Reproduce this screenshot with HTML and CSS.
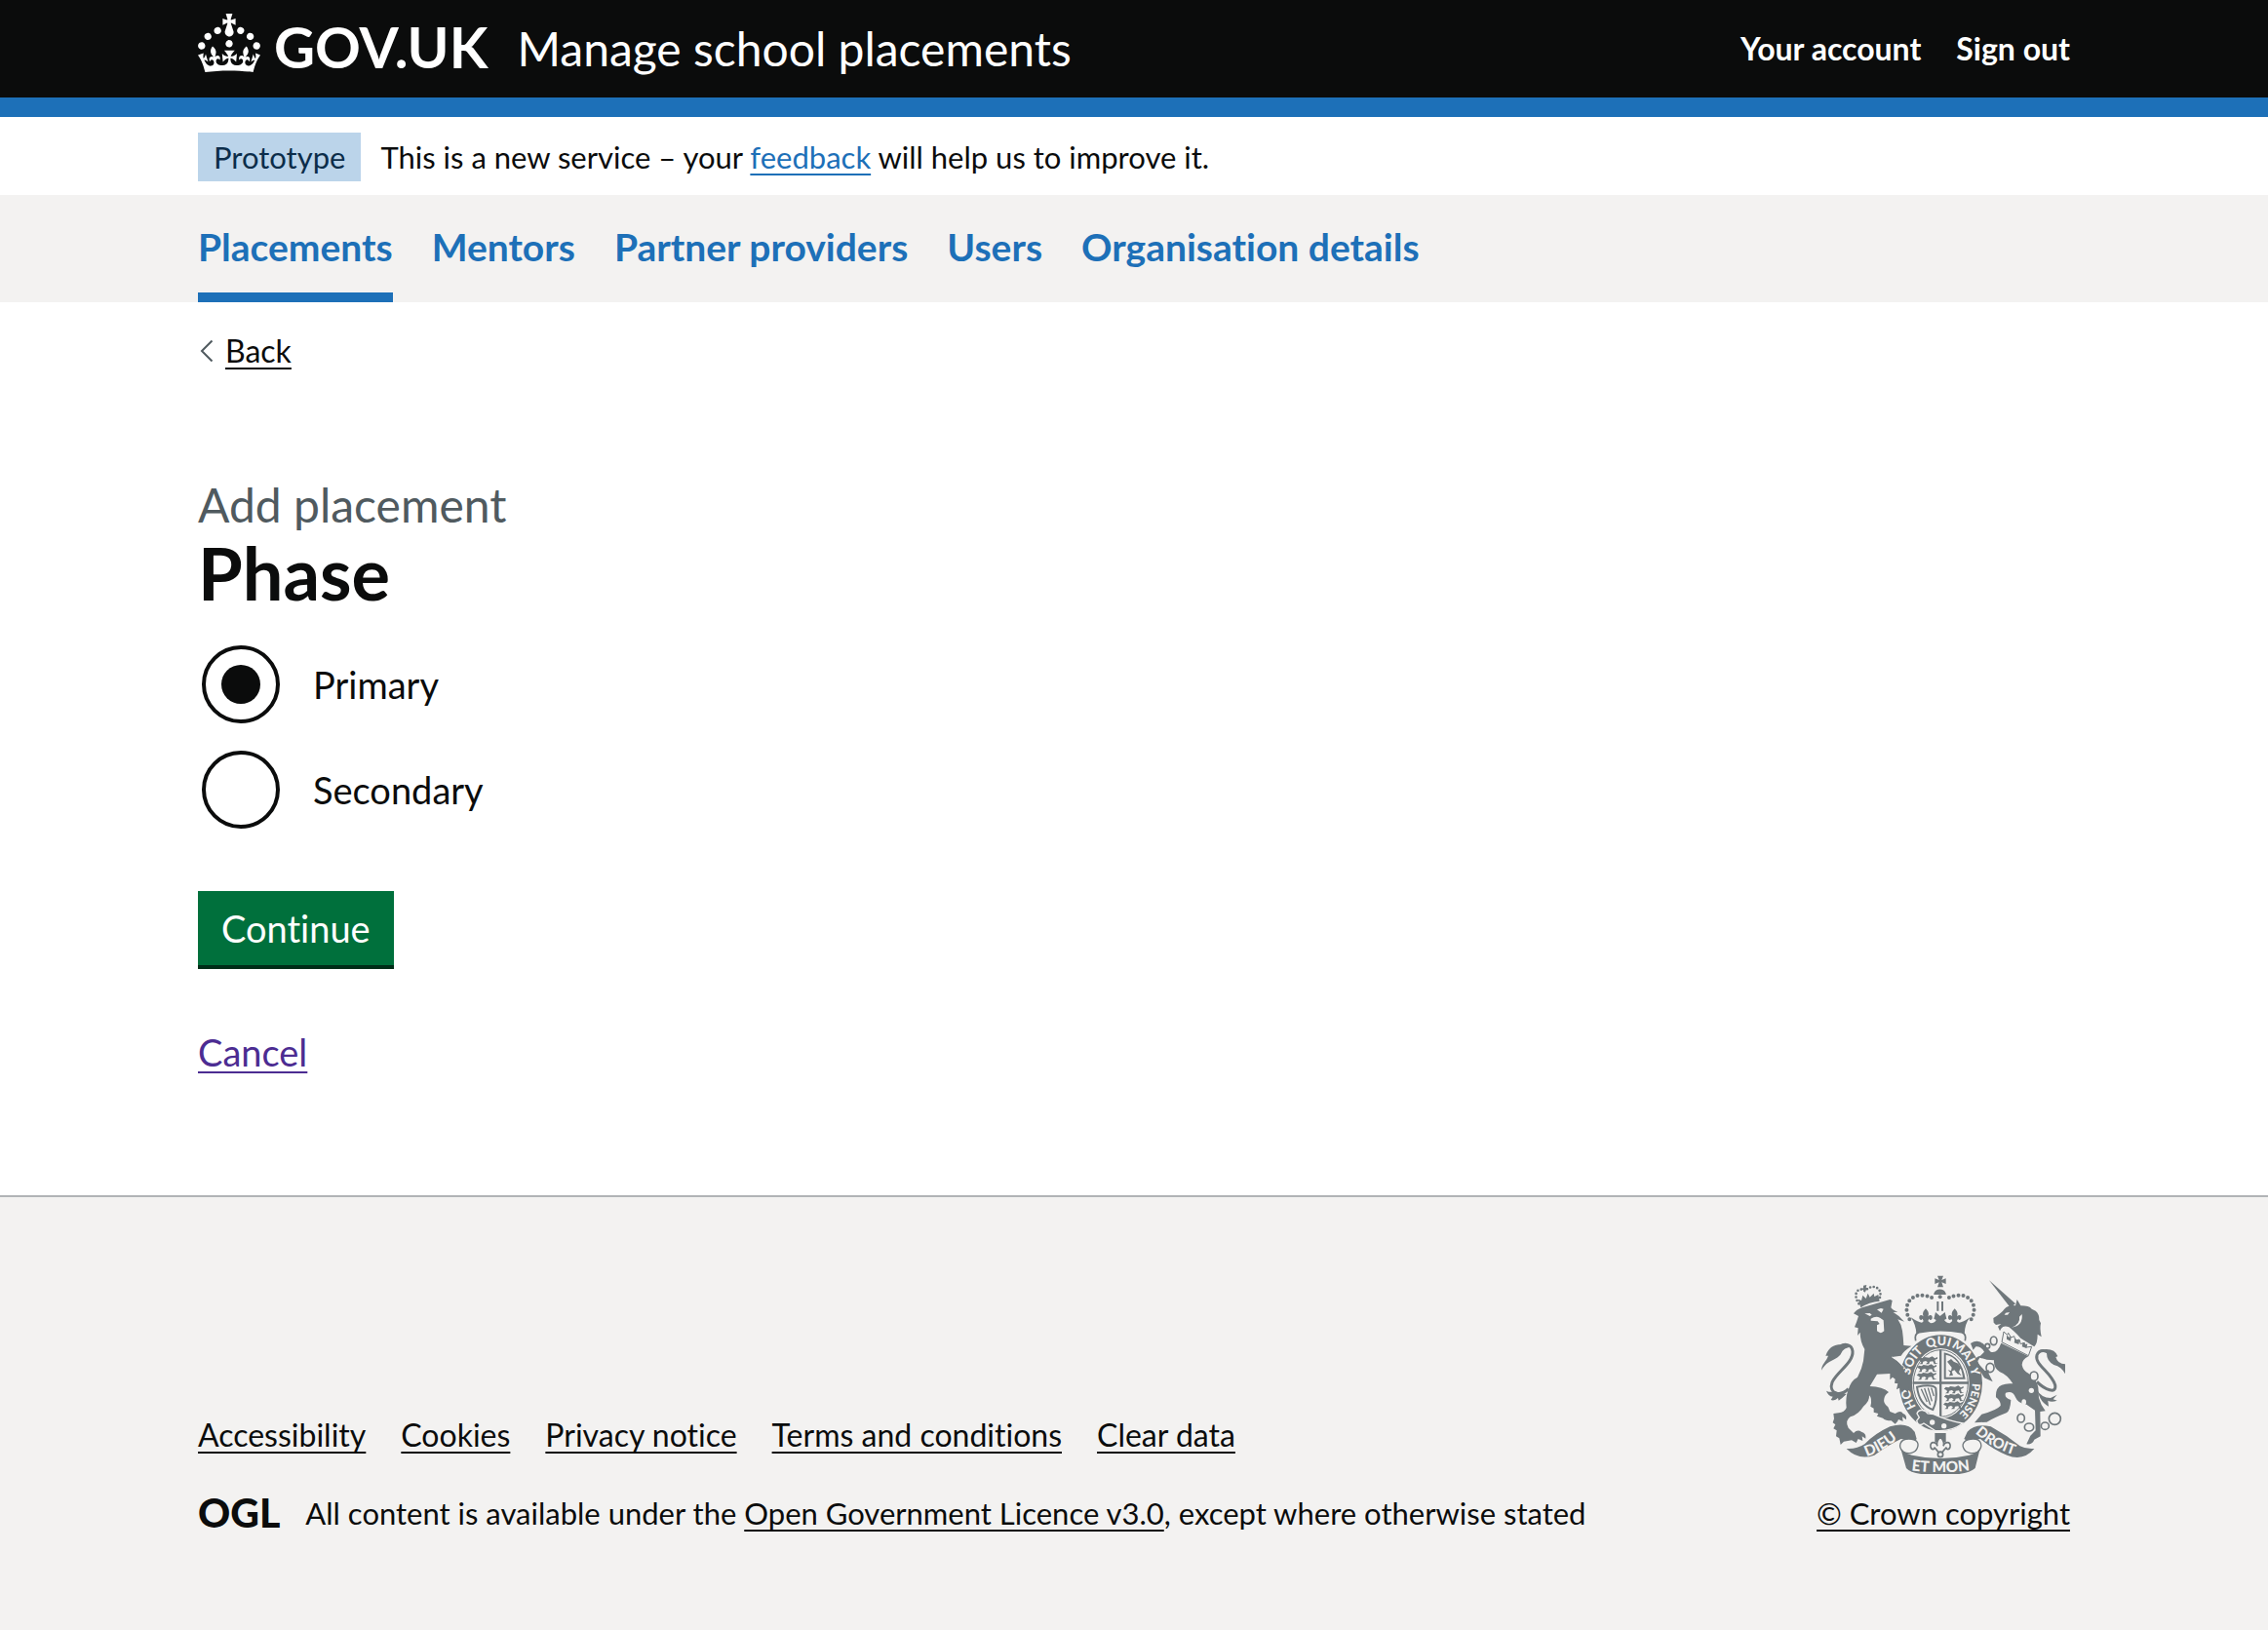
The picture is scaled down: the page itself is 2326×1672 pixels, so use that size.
FILE: index.html
```html
<!DOCTYPE html>
<html lang="en">
<head>
<meta charset="utf-8">
<meta name="viewport" content="width=device-width, initial-scale=1">
<title>Phase - Manage school placements - GOV.UK</title>
<link rel="stylesheet" href="styles.css">
</head>
<body>
<header class="header">
  <div class="container header-row">
    <a class="logo" href="#">
      <svg class="logo-crown" viewBox="0 0 32 30" aria-hidden="true"><path fill="currentColor" d="M22.6 10.4c-1 .4-2-.1-2.4-1-.4-.9.1-2 1-2.4.9-.4 2 .1 2.4 1s-.1 2-1 2.4m-5.9 6.7c-.9.4-2-.1-2.4-1-.4-.9.1-2 1-2.4.9-.4 2 .1 2.4 1s-.1 2-1 2.4m10.8-3.7c-1 .4-2-.1-2.4-1-.4-.9.1-2 1-2.4.9-.4 2 .1 2.4 1s0 2-1 2.4m3.3 4.8c-1 .4-2-.1-2.4-1-.4-.9.1-2 1-2.4.9-.4 2 .1 2.4 1s-.1 2-1 2.4M17 4.700l2.300 1.200V2.500l-2.300.7-.2-.2.9-3h-3.400l.9 3-.2.2c-.1.1-2.300-.7-2.300-.7v3.400L15 4.700c.1.1.1.2.2.2l-1.300 4c-.1.2-.1.4-.1.6 0 1.100.8 2 1.900 2.200h.7c1-.2 1.900-1.100 1.900-2.100 0-.2 0-.4-.1-.6l-1.300-4c-.1-.2 0-.2.1-.3m-7.600 5.700c.9.4 2-.1 2.400-1 .4-.9-.1-2-1-2.400-.9-.4-2 .1-2.400 1s0 2 1 2.400m-5 3c.9.4 2-.1 2.400-1 .4-.9-.1-2-1-2.400-.9-.4-2 .1-2.400 1s.1 2 1 2.400m-3.200 4.800c.9.4 2-.1 2.400-1 .4-.9-.1-2-1-2.400-.9-.4-2 .1-2.400 1s0 2 1 2.400m14.800 11c4.400 0 8.600.3 12.300.8 1.100-4.500 2.400-7 3.700-8.800l-2.500-.9c.2 1.300.3 1.900 0 2.700-.4-.4-.8-1.100-1.100-2.300l-1.200 4c.7-.5 1.300-.8 2-.9-1.100 2.500-2.600 3.100-3.500 3-1.100-.2-1.700-1.200-1.500-2.100.3-1.200 1.500-1.500 2.100-.1 1.100-2.300-.8-3-2-2.300 1.900-1.900 2.100-3.500.6-5.600-2.100 1.600-2.100 3.200-1.200 5.500-1.200-1.400-3.200-.6-2.500 1.600.9-1.400 2.100-.5 1.900.8-.2 1.100-1.700 2.100-3.500 1.900-2.700-.2-2.900-2.100-2.900-3.600.7-.1 1.900.5 2.900 1.900l.4-4.300c-1.100 1.100-2.100 1.400-3.200 1.400.4-1.200 2.100-3 2.100-3h-5.400s1.700 1.900 2.100 3c-1.100 0-2.100-.2-3.200-1.400l.4 4.300c1-1.400 2.200-2 2.900-1.900-.1 1.500-.2 3.400-2.900 3.600-1.900.2-3.400-.8-3.500-1.900-.2-1.300 1-2.200 1.900-.8.7-2.300-1.200-3-2.500-1.600.9-2.200.9-3.900-1.200-5.500-1.500 2-1.300 3.700.6 5.600-1.200-.7-3.100 0-2 2.300.6-1.400 1.800-1.100 2.100.1.2.9-.3 1.900-1.500 2.100-.9.2-2.400-.5-3.500-3 .6 0 1.200.3 2 .9l-1.200-4c-.3 1.100-.7 1.900-1.100 2.300-.3-.8-.2-1.400 0-2.700l-2.900.9C1.300 23 2.600 25.500 3.700 30c3.700-.5 7.900-.8 12.300-.8"/></svg>
      <span class="logo-text">GOV.UK</span>
    </a>
    <a class="service-name" href="#">Manage school placements</a>
    <nav class="account" aria-label="Account">
      <a href="#">Your account</a>
      <a href="#">Sign out</a>
    </nav>
  </div>
</header>

<div class="container phase-banner">
  <strong class="tag">Prototype</strong>
  <span>This is a new service – your <a class="link" href="#">feedback</a> will help us to improve it.</span>
</div>

<nav class="primary-nav" aria-label="Primary">
  <ul class="container nav-list">
    <li><a class="current" aria-current="page" href="#">Placements</a></li>
    <li><a href="#">Mentors</a></li>
    <li><a href="#">Partner providers</a></li>
    <li><a href="#">Users</a></li>
    <li><a href="#">Organisation details</a></li>
  </ul>
</nav>

<div class="container page">
  <div class="back">
    <svg class="back-arrow" viewBox="0 0 14 24" aria-hidden="true"><path d="M12.500 1.500 2 12l10.500 10.500" fill="none" stroke="#505a5f" stroke-width="2"/></svg>
    <a class="link link-plain" href="#">Back</a>
  </div>
  <main>
    <form>
      <fieldset class="fieldset">
        <legend class="legend">
          <span class="caption">Add placement</span>
          <h1 class="heading">Phase</h1>
        </legend>
        <div class="radios">
          <div class="radio"><input type="radio" id="primary" name="phase" checked><label for="primary">Primary</label></div>
          <div class="radio"><input type="radio" id="secondary" name="phase"><label for="secondary">Secondary</label></div>
        </div>
      </fieldset>
      <button class="button" type="button">Continue</button>
      <p class="cancel"><a class="link link-visited" href="#">Cancel</a></p>
    </form>
  </main>
</div>

<footer class="footer">
  <div class="container footer-row">
    <div class="footer-meta">
      <ul class="footer-links">
        <li><a class="link link-plain" href="#">Accessibility</a></li>
        <li><a class="link link-plain" href="#">Cookies</a></li>
        <li><a class="link link-plain" href="#">Privacy notice</a></li>
        <li><a class="link link-plain" href="#">Terms and conditions</a></li>
        <li><a class="link link-plain" href="#">Clear data</a></li>
      </ul>
      <div class="licence">
        <span class="ogl">OGL</span>
        <span>All content is available under the <a class="link link-plain" href="#">Open Government Licence v3.0</a>, except where otherwise stated</span>
      </div>
    </div>
    <a class="copyright" href="#">
      <svg class="crest" viewBox="51 52 750 612" aria-hidden="true">
        <defs>
          <path id="garter" d="M418 500A97 116 0 0 1 418 268A97 116 0 0 1 418 500"/>
          <path id="dieu" d="M190 610Q250 590 300 543"/>
          <path id="droit" d="M524 538Q580 590 662 610"/>
          <path id="mon" d="M318 651Q418 666 518 651"/>
          <g id="fleur"><path d="M0-24C9-14 12-8 5 4C8-6 22-8 20 6C18 12 12 12 11 7C8 10 7 14 5 19H-5C-7 14-8 10-11 7C-12 12-18 12-20 6C-22-8-8-6-5 4C-12-8-9-14 0-24Z"/></g>
          <g id="beast"><path d="M0 8 6 2 14 4 20 0 34 2 44-2 52 4 60 0 60 5 52 9 54 18 62 20 50 22 46 13 36 14 34 22 24 22 30 16 24 12 16 14 14 22 4 22 10 17 8 12Z"/></g>
        </defs>
        <g fill="#6f777b">
          <!-- royal crown -->
          <path d="M408 54h18l-5 13 13-5v17l-13-5 5 15h-18l5-15-13 5V62l13 5ZM397 108a20 20 0 0 1 37 0v4h-37Z"/>
          <circle cx="416" cy="119" r="6"/>
          <path d="M406 133h6v29h-6ZM420 133h6v29h-6Z"/>
          <g fill="none" stroke="#6f777b" stroke-width="12" stroke-linecap="round" stroke-dasharray="0 15"><path d="M322 188C294 138 338 92 398 125"/><path d="M512 188C540 138 496 92 436 125"/></g>
          <path d="M326 182Q350 198 360 198L372 188 387 200Q401 199 404 190L397 186 402 166 416 178 431 166 436 186 429 190Q434 199 446 200L460 188 474 198Q486 198 508 182Q492 202 491 233Q418 213 343 233Q342 204 326 182Z"/>
          <use href="#fleur" x="372" y="179"/><use href="#fleur" x="461" y="179"/>
          <path d="M341 254Q336 232 352 228Q418 216 482 228Q498 232 493 254" fill="#f3f2f1" stroke="#6f777b" stroke-width="5"/>

          <!-- garter and shield -->
          <path fill-rule="evenodd" d="M418 236A128 148 0 0 1 418 532A128 148 0 0 1 418 236ZM418 277A88 108 0 0 0 418 493A88 108 0 0 0 418 277Z"/>
          <ellipse cx="418" cy="385" rx="84" ry="103" fill="none" stroke="#6f777b" stroke-width="3"/>
          <path d="M414 281h7v208h-7ZM332 380h172v7H332Z"/>
          <use href="#beast" x="348" y="304"/><use href="#beast" x="345" y="328"/><use href="#beast" x="344" y="352"/>
          <use href="#beast" x="428" y="394"/><use href="#beast" x="428" y="418"/><use href="#beast" x="426" y="442"/>
          <path d="M428 290Q482 300 494 372H428ZM434 297V366H486Q478 306 434 297Z" fill-rule="evenodd"/>
          <path d="M438 318l12-8 8 8 14 6 12 18-6-2-4 10 8 12-12-6-10-12-8 4 4 12-12 2 4-10-8-8 10 2 2-10Z"/>
          <path d="M345 396Q392 386 403 400Q408 438 394 466Q352 452 345 396Z" fill="none" stroke="#6f777b" stroke-width="6"/>
          <path d="M358 402 376 442M368 400 386 452M379 399 391 440M389 399 397 424" stroke="#6f777b" stroke-width="4"/>
          <g fill="#f3f2f1" font-family="Lato, sans-serif" font-weight="900" font-size="38" text-anchor="middle">
            <text><textPath href="#garter" startOffset="18%">HO</textPath></text>
            <text><textPath href="#garter" startOffset="35%">SOIT</textPath></text>
            <text><textPath href="#garter" startOffset="49%">QUI</textPath></text>
            <text><textPath href="#garter" startOffset="61%">MAL</textPath></text>
            <text><textPath href="#garter" startOffset="70%">Y</textPath></text>
            <text font-size="34"><textPath href="#garter" startOffset="83%">PENSE</textPath></text>
          </g>
          <path d="M345 478C350 462 372 466 378 478L396 480Q440 500 486 508Q450 535 400 530L366 508Q350 520 344 500L352 490Z" stroke="#f3f2f1" stroke-width="4"/>
          <circle cx="392" cy="505" r="8" fill="#f3f2f1"/><circle cx="428" cy="516" r="8" fill="#f3f2f1"/>
          <path d="M400 538h34v28h-34Z"/>
          <path d="M417 550C428 562 430 570 426 578C430 564 450 562 447 580C444 592 434 588 436 582C430 588 426 592 424 596H410C408 592 404 588 398 582C400 588 390 592 387 580C384 562 404 564 408 578C404 570 406 562 417 550Z" fill="#f3f2f1" stroke="#6f777b" stroke-width="5"/>
          <circle cx="417" cy="604" r="8" fill="#f3f2f1" stroke="#6f777b" stroke-width="5"/>

          <!-- lion -->
          <g fill="none" stroke="#6f777b" stroke-width="8" stroke-linecap="round" stroke-dasharray="0 11"><path d="M166 140C144 105 168 86 186 101C206 74 246 92 228 128"/></g>
          <path d="M180 84 190 82 188 90 196 92 188 98 184 106 180 98 172 94 180 92ZM164 126 174 130 178 114 188 124 194 108 200 120 212 108 214 118 226 112 230 132Q198 134 172 152Z"/>
          <path d="M150 170Q158 158 176 152L262 127 269 130 265 152Q270 160 286 165L272 166Q290 176 306 195L286 188Q298 205 300 223Q303 244 304 268L328 270Q304 285 296 300L268 304Q292 318 304 340Q310 362 328 376L328 405 320 396 318 414 306 402 302 412 294 398 282 404 286 386 276 384 278 372 270 366 262 374 262 355 250 356 222 357 200 394Q240 396 258 412Q246 420 244 432Q240 445 256 458L262 472 278 478Q296 466 302 478Q314 480 312 497L300 488 302 502 288 496Q286 504 278 510L266 500Q248 500 240 492L222 486 226 478 212 474 212 462 202 456Q208 430 198 422Q200 440 180 456Q166 480 140 488Q122 500 134 522L150 538Q162 526 174 534Q190 538 187 555L176 548 178 562 164 556 158 568 144 560 120 564 110 574 106 554 96 548 98 530 88 524 94 512 86 506 90 494 88 478 104 476Q122 474 128 460Q124 430 134 404Q142 376 162 366Q176 340 180 316L184 280Q170 256 170 228L162 238 164 215 153 212Q160 195 165 178Z"/>
          <path d="M184 170l16 8 6-4-6-5ZM222 158l14 10 6-12-8-2ZM203 186q15-9 28-3l11 8 2 33q-10 11-22 0l0-18 8-4-6-8-21-2Z" fill="#f3f2f1"/>
          <path d="M268 304Q300 322 316 350" fill="none" stroke="#f3f2f1" stroke-width="3"/>
          <path d="M134 402C108 428 72 416 84 382C98 350 150 322 147 286C144 264 122 262 108 272" fill="none" stroke="#6f777b" stroke-width="9"/>
          <path d="M51 345C52 324 66 318 72 300L64 300C76 268 96 264 120 266L146 272Q118 276 112 292C100 316 70 310 51 345ZM66 408Q78 414 92 410L128 418Q116 430 104 438L102 430Q92 440 80 436L86 426Q72 424 66 408Z"/>

          <!-- unicorn -->
          <path d="M567 68 648 140 632 152Z"/>
          <path d="M580 184Q606 168 614 156Q628 142 648 146L653 127 664 146Q690 146 698 156L710 162Q722 172 721 190L726 200Q722 216 728 242L716 234Q716 262 706 272Q690 262 664 246Q644 224 628 212Q612 206 604 216L600 224 594 210 604 202 588 205 581 198Z"/>
          <path d="M618 168l12-2-6 8h-10ZM668 172Q672 208 636 213Q664 202 660 180Z" fill="#f3f2f1"/>
          <path d="M612 226 623 236 626 230 634 244 644 240 648 254 660 250 664 264 676 260 680 274 698 272 688 300 606 258Z" fill="#f3f2f1" stroke="#6f777b" stroke-width="3"/>
          <path d="M621 249l0-12 8 6 6-3-2 15ZM644 260l3-14 8 8 6-3-3 14ZM668 272l3-14 8 8 6-3-3 14Z"/>
          <path d="M604 261 688 302Q668 312 668 328Q672 348 688 354Q714 374 718 398L720 430Q726 452 740 470L724 472 725 548 706 558Q700 574 682 572L694 546 710 530 708 468 682 450Q656 448 648 428Q640 406 618 414Q612 430 634 436Q632 470 620 476Q584 490 560 504L522 506 544 480Q590 468 602 454Q604 440 588 428Q586 398 606 390Q620 384 640 386Q622 358 600 350Q580 336 582 314L560 312 538 306 530 320 554 346 566 344 566 356 578 380 552 368 538 344 526 330Q518 304 540 300L552 288Q542 270 526 272L518 282 510 262Q532 248 550 264L572 288Q592 294 604 261Z"/>
          <g fill="#f3f2f1"><circle cx="697" cy="407" r="8"/><ellipse cx="674" cy="443" rx="7" ry="9"/></g>
          <g fill="none" stroke="#6f777b" stroke-width="5"><ellipse cx="581" cy="254" rx="10" ry="13"/><circle cx="562" cy="270" r="7"/><ellipse cx="570" cy="337" rx="12" ry="14"/><ellipse cx="705" cy="363" rx="12" ry="14" fill="#f3f2f1"/><ellipse cx="665" cy="492" rx="11" ry="13"/><ellipse cx="690" cy="520" rx="14" ry="12"/><ellipse cx="739" cy="516" rx="12" ry="11"/><circle cx="769" cy="494" r="18"/></g>
          <path d="M714 380C738 404 776 420 770 390C758 350 706 328 714 298C722 278 744 284 752 292" fill="none" stroke="#6f777b" stroke-width="9"/>
          <path d="M726 282Q768 274 778 302L772 304Q778 326 801 326V356Q790 334 766 328Q744 316 744 292ZM712 402Q728 430 756 430L776 420 764 434 776 438Q758 444 748 438L750 456Q732 446 724 430Z"/>

          <!-- motto ribbon -->
          <path d="M128 586Q160 588 184 572Q214 540 262 518Q316 502 338 534L344 556Q334 570 318 574Q318 558 296 556Q258 574 214 606Q166 624 128 586Z"/>
          <path d="M706 586Q680 588 662 578Q620 544 572 518Q524 506 500 534L490 556Q504 566 518 572Q524 556 540 556Q580 590 622 606Q672 626 706 586Z"/>
          <path d="M320 556C346 556 352 570 346 584C340 600 318 604 304 596C284 580 292 556 320 556ZM518 556C492 556 482 570 488 584C494 600 516 604 532 596C550 580 544 556 518 556Z" fill="#f3f2f1" stroke="#6f777b" stroke-width="4"/>
          <path d="M294 582Q300 598 330 606Q418 626 506 606Q534 598 540 582L524 646Q500 668 418 667Q330 668 312 646Z"/>
          <g fill="#f3f2f1" font-family="Lato, sans-serif" font-weight="900" font-size="46">
            <text><textPath href="#dieu">DIEU</textPath></text>
            <text font-size="44"><textPath href="#droit">DROIT</textPath></text>
            <text text-anchor="middle"><textPath href="#mon" startOffset="50%">ET MON</textPath></text>
          </g>
        </g>
      </svg>
      <span class="link link-plain">© Crown copyright</span>
    </a>
  </div>
</footer>
</body>
</html>
```
FILE: styles.css
```css
*, *::before, *::after { box-sizing: border-box; }

body {
  margin: 0;
  min-height: 100vh;
  display: flex;
  flex-direction: column;
  background: #fff;
  color: #0b0c0c;
  font-family: Lato, sans-serif;
  font-size: 32px;
  font-variant-ligatures: none;
  line-height: 40px;
}

ul { margin: 0; padding: 0; list-style: none; }

.container { width: calc(100% - 60px); max-width: 1920px; margin: 0 auto; }

.link {
  color: #1d70b8;
  text-decoration: underline;
  text-decoration-thickness: 2px;
  text-underline-offset: 5px;
  text-decoration-skip-ink: none;
}
.link-plain { color: #0b0c0c; }
.link-visited { color: #4c2c92; }

.header { background: #0b0c0c; border-bottom: 20px solid #1d70b8; }
.header a { color: #fff; text-decoration: none; }
.header-row { display: flex; align-items: center; min-height: 100px; }
.logo { display: flex; align-items: center; gap: 14px; margin-right: 30px; }
.logo-crown { width: 64px; height: 60px; margin-bottom: 12px; }
.logo-text { padding-bottom: 4px; font-size: 58px; line-height: 60px; font-weight: 700; }
.service-name { font-size: 48px; line-height: 60px; }
.account { display: flex; gap: 36px; margin-left: auto; font-weight: 700; }

.phase-banner { display: flex; align-items: center; gap: 20px; padding: 16px 0 14px; font-size: 31px; }
.tag { padding: 5px 16px; background: #bbd4ea; color: #0c2d4a; font-weight: 400; }

.primary-nav { background: #f3f2f1; }
.nav-list { display: flex; gap: 40px; font-size: 39px; line-height: 50px; font-weight: 700; }
.nav-list a { display: block; padding: 28px 0 22px; border-bottom: 10px solid transparent; color: #1d70b8; text-decoration: none; }
.nav-list .current { border-color: #1d70b8; }

.page { flex: 1; }
.back { display: flex; align-items: center; gap: 12px; margin-top: 30px; padding-left: 2px; }
.back-arrow { width: 14px; height: 24px; }

main { padding: 108px 0 120px; font-size: 38px; line-height: 50px; }
.fieldset { margin: 0 0 64px; padding: 0; border: 0; }
.legend { padding: 0; margin-bottom: 34px; }
.caption { display: block; color: #505a5f; font-size: 48px; line-height: 60px; }
.heading { margin: 0; font-size: 74px; line-height: 80px; font-weight: 700; }
.radios { display: grid; gap: 28px; padding-left: 4px; }
.radio { display: flex; align-items: center; gap: 34px; }
.radio input {
  appearance: none;
  width: 80px;
  height: 80px;
  margin: 0;
  border: 4px solid #0b0c0c;
  border-radius: 50%;
  display: grid;
  place-items: center;
}
.radio input:checked::before { content: ""; width: 40px; height: 40px; border-radius: 50%; background: #0b0c0c; }

.button {
  display: block;
  padding: 13px 24px;
  border: 0;
  background: #00703c;
  box-shadow: 0 4px 0 #002d18;
  color: #fff;
  font: inherit;
}
.cancel { margin: 64px 0 0; }

.footer { background: #f3f2f1; border-top: 2px solid #b1b4b6; padding: 80px 0 100px; }
.footer-row { display: flex; justify-content: space-between; align-items: flex-end; }
.footer-links { display: flex; gap: 36px; margin-bottom: 40px; }
.licence { display: flex; align-items: center; gap: 26px; font-size: 31px; }
.ogl { font-weight: 900; font-size: 41px; line-height: 40px; }
.copyright { display: grid; justify-items: center; gap: 20px; font-size: 31px; text-decoration: none; }
.crest { width: 250px; height: 204px; }
```
